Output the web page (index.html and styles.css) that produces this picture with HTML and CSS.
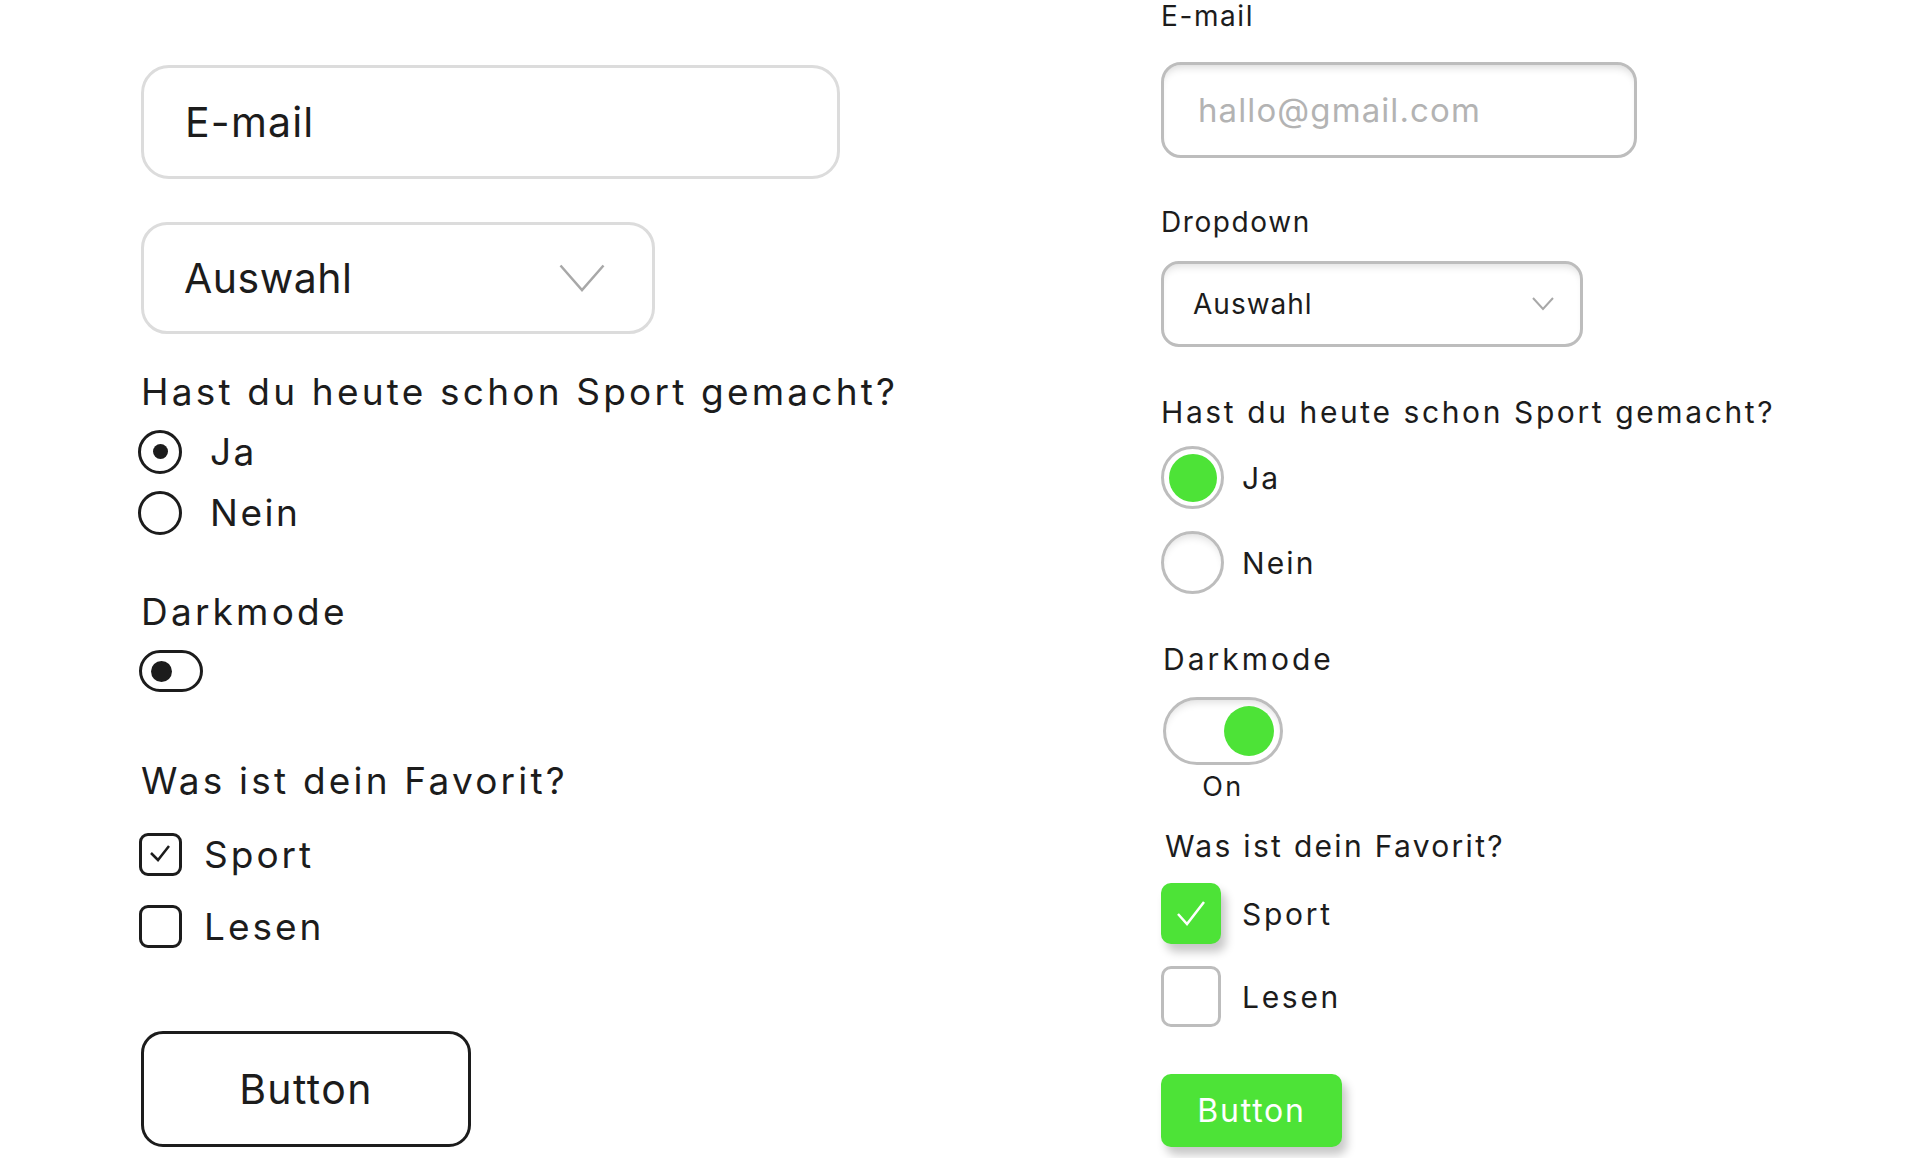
FILE: index.html
```html
<!DOCTYPE html>
<html lang="de">
<head>
    <meta charset="UTF-8">
    <meta name="viewport" content="width=device-width, initial-scale=1.0">
    <title>Formular Elemente</title>
    <link rel="stylesheet" href="styles.css">
</head>
<body>
    <div class="page">
        <!-- wireframe -->
        <section class="col plain">
            <div class="input-box">E-mail</div>
            <div class="select-box">
                <span>Auswahl</span>
                <svg class="chevron" viewBox="0 0 46 28"><polyline points="1.5,1.5 23,26 44.5,1.5"/></svg>
            </div>
            <p class="question q-sport">Hast du heute schon Sport gemacht?</p>
            <div class="radio-row"><span class="radio checked"></span>Ja</div>
            <div class="radio-row"><span class="radio"></span>Nein</div>
            <p class="question q-dark">Darkmode</p>
            <span class="toggle"></span>
            <p class="question q-fav">Was ist dein Favorit?</p>
            <div class="check-row">
                <span class="check"><svg viewBox="0 0 43 43"><polyline points="12,20 19,27 30,13"/></svg></span>Sport
            </div>
            <div class="check-row"><span class="check"></span>Lesen</div>
            <button class="btn">Button</button>
        </section>

        <!-- styled -->
        <section class="col styled">
            <label class="label l-mail" for="mail">E-mail</label>
            <input class="input" id="mail" type="email" placeholder="hallo@gmail.com">
            <label class="label l-drop">Dropdown</label>
            <div class="select-box">
                <span>Auswahl</span>
                <svg class="chevron" viewBox="0 0 22 14"><polyline points="1,1 11,12 21,1"/></svg>
            </div>
            <p class="question q-sport">Hast du heute schon Sport gemacht?</p>
            <div class="radio-row"><span class="radio checked"></span>Ja</div>
            <div class="radio-row"><span class="radio"></span>Nein</div>
            <p class="question q-dark">Darkmode</p>
            <div class="toggle-wrap">
                <span class="toggle"></span>
                <span class="toggle-text">On</span>
            </div>
            <p class="question q-fav">Was ist dein Favorit?</p>
            <div class="check-row">
                <span class="check checked"><svg viewBox="0 0 60 60"><polyline points="17,31 26,41 43,19"/></svg></span>Sport
            </div>
            <div class="check-row"><span class="check"></span>Lesen</div>
            <button class="btn">Button</button>
        </section>
    </div>
</body>
</html>
```

FILE: styles.css
```css
body {
    margin: 0;
    font-family: Inter, "Open Sans", sans-serif;
    color: #1c1c1c;
    background-color: #fff;
}

.page {
    display: grid;
    grid-template-columns: 1020px 1fr;
    padding-left: 141px;
    height: 1158px;
    overflow: hidden;
}

.col {
    display: flex;
    flex-direction: column;
    align-items: flex-start;
}

p {
    margin: 0;
}

/* ---------- left column, wireframe look ---------- */

.plain {
    padding-top: 65px;
    font-size: 37px;
    letter-spacing: 3px;
}

.plain .input-box {
    box-sizing: border-box;
    width: 699px;
    height: 114px;
    border: 3px solid #dcdcdc;
    border-radius: 28px;
    padding-left: 41px;
    display: flex;
    align-items: center;
    font-size: 41px;
    letter-spacing: 1.2px;
}

.plain .select-box {
    box-sizing: border-box;
    width: 514px;
    height: 112px;
    margin-top: 43px;
    border: 3px solid #dcdcdc;
    border-radius: 26px;
    padding: 0 47px 0 40px;
    display: flex;
    align-items: center;
    justify-content: space-between;
    font-size: 41px;
    letter-spacing: 0.5px;
}

.plain .chevron {
    width: 46px;
    height: 28px;
    fill: none;
    stroke: #a8a8a8;
    stroke-width: 2.5;
}

.plain .question {
    line-height: 44px;
    letter-spacing: 3.2px;
}

.plain .q-sport {
    margin-top: 36px;
}

.plain .radio-row {
    height: 61px;
    margin-left: -3px;
    display: flex;
    align-items: center;
    gap: 28px;
    letter-spacing: 2.5px;
}

.plain .q-sport + .radio-row {
    margin-top: 7px;
}

.plain .radio {
    box-sizing: border-box;
    width: 44px;
    height: 44px;
    border: 3px solid #1c1c1c;
    border-radius: 50%;
    display: flex;
    align-items: center;
    justify-content: center;
}

.plain .radio.checked::after {
    content: "";
    width: 15px;
    height: 15px;
    border-radius: 50%;
    background-color: #1c1c1c;
}

.plain .q-dark {
    margin-top: 47px;
}

.plain .toggle {
    box-sizing: border-box;
    width: 64px;
    height: 42px;
    margin-top: 16px;
    margin-left: -2px;
    border: 3px solid #1c1c1c;
    border-radius: 21px;
    display: flex;
    align-items: center;
    padding-left: 9px;
}

.plain .toggle::after {
    content: "";
    width: 21px;
    height: 21px;
    border-radius: 50%;
    background-color: #1c1c1c;
}

.plain .q-fav {
    margin-top: 67px;
}

.plain .check-row {
    height: 72px;
    margin-left: -2px;
    display: flex;
    align-items: center;
    gap: 22px;
}

.plain .q-fav + .check-row {
    margin-top: 15px;
}

.plain .check {
    box-sizing: border-box;
    width: 43px;
    height: 43px;
    border: 3px solid #1c1c1c;
    border-radius: 9px;
    position: relative;
}

.plain .check svg {
    position: absolute;
    left: -3px;
    top: -3px;
    width: 43px;
    height: 43px;
    fill: none;
    stroke: #1c1c1c;
    stroke-width: 2.5;
}

.plain .btn {
    box-sizing: border-box;
    width: 330px;
    height: 116px;
    margin-top: 69px;
    border: 3px solid #1c1c1c;
    border-radius: 22px;
    background-color: #fff;
    font-family: inherit;
    font-size: 41px;
    letter-spacing: 1.4px;
    color: #1c1c1c;
}

/* ---------- right column, styled ---------- */

.styled {
    font-size: 30px;
    letter-spacing: 2.5px;
}

.styled .label {
    font-size: 28px;
    line-height: 34px;
    letter-spacing: 1.6px;
}

.styled .l-mail {
    margin-top: -1px;
}

.styled .input {
    box-sizing: border-box;
    width: 476px;
    height: 96px;
    margin-top: 29px;
    border: 3px solid #bdbdbd;
    border-radius: 20px;
    padding-left: 34px;
    box-shadow: inset 0 7px 8px -5px rgba(0, 0, 0, 0.16);
    font-family: inherit;
    font-size: 33px;
    letter-spacing: 1.1px;
    color: #1c1c1c;
    outline: none;
}

.styled .input::placeholder {
    color: #b3b3b3;
}

.styled .l-drop {
    margin-top: 47px;
}

.styled .select-box {
    box-sizing: border-box;
    width: 422px;
    height: 86px;
    margin-top: 22px;
    border: 3px solid #bdbdbd;
    border-radius: 18px;
    padding: 0 26px 0 29px;
    box-shadow: inset 0 7px 8px -5px rgba(0, 0, 0, 0.14);
    display: flex;
    align-items: center;
    justify-content: space-between;
    font-size: 28px;
    letter-spacing: 1px;
}

.styled .chevron {
    width: 22px;
    height: 14px;
    fill: none;
    stroke: #a8a8a8;
    stroke-width: 2;
}

.styled .question {
    line-height: 36px;
    letter-spacing: 2.6px;
}

.styled .q-sport {
    margin-top: 47px;
}

.styled .radio-row {
    height: 85px;
    display: flex;
    align-items: center;
    gap: 18px;
    letter-spacing: 2.1px;
}

.styled .q-sport + .radio-row {
    margin-top: 5px;
}

.styled .radio {
    box-sizing: border-box;
    width: 63px;
    height: 63px;
    border: 3px solid #bdbdbd;
    border-radius: 50%;
    box-shadow: inset 0 7px 8px -5px rgba(0, 0, 0, 0.14);
    display: flex;
    align-items: center;
    justify-content: center;
}

.styled .radio.checked {
    box-shadow: none;
}

.styled .radio.checked::after {
    content: "";
    width: 48px;
    height: 48px;
    border-radius: 50%;
    background-color: #4de337;
}

.styled .q-dark {
    margin-top: 36px;
    padding-left: 2px;
    letter-spacing: 3px;
}

.styled .toggle-wrap {
    display: flex;
    flex-direction: column;
    align-items: center;
    gap: 5px;
    margin-top: 20px;
    margin-left: 2px;
}

.styled .toggle {
    box-sizing: border-box;
    width: 120px;
    height: 68px;
    border: 3px solid #bdbdbd;
    border-radius: 34px;
    box-shadow: inset 0 7px 8px -5px rgba(0, 0, 0, 0.14);
    display: flex;
    align-items: center;
    justify-content: flex-end;
    padding-right: 6px;
}

.styled .toggle::after {
    content: "";
    width: 50px;
    height: 50px;
    border-radius: 50%;
    background-color: #4de337;
}

.styled .toggle-text {
    font-size: 27px;
    line-height: 34px;
    letter-spacing: 2.5px;
}

.styled .q-fav {
    margin-top: 24px;
    padding-left: 4px;
    letter-spacing: 2.3px;
}

.styled .check-row {
    height: 83px;
    display: flex;
    align-items: center;
    gap: 21px;
    letter-spacing: 2.7px;
}

.styled .q-fav + .check-row {
    margin-top: 8px;
}

.styled .check {
    box-sizing: border-box;
    width: 60px;
    height: 61px;
    border: 3px solid #bdbdbd;
    border-radius: 10px;
}

.styled .check.checked {
    border: none;
    background-color: #4de337;
    box-shadow: 5px 8px 10px rgba(0, 0, 0, 0.22);
}

.styled .check svg {
    width: 60px;
    height: 60px;
    fill: none;
    stroke: #fff;
    stroke-width: 2.5;
}

.styled .btn {
    box-sizing: border-box;
    width: 181px;
    height: 73px;
    margin-top: 36px;
    border: none;
    border-radius: 10px;
    background-color: #4de337;
    box-shadow: 5px 8px 10px rgba(0, 0, 0, 0.22);
    font-family: inherit;
    font-size: 32px;
    letter-spacing: 1.8px;
    color: #fff;
}
```
